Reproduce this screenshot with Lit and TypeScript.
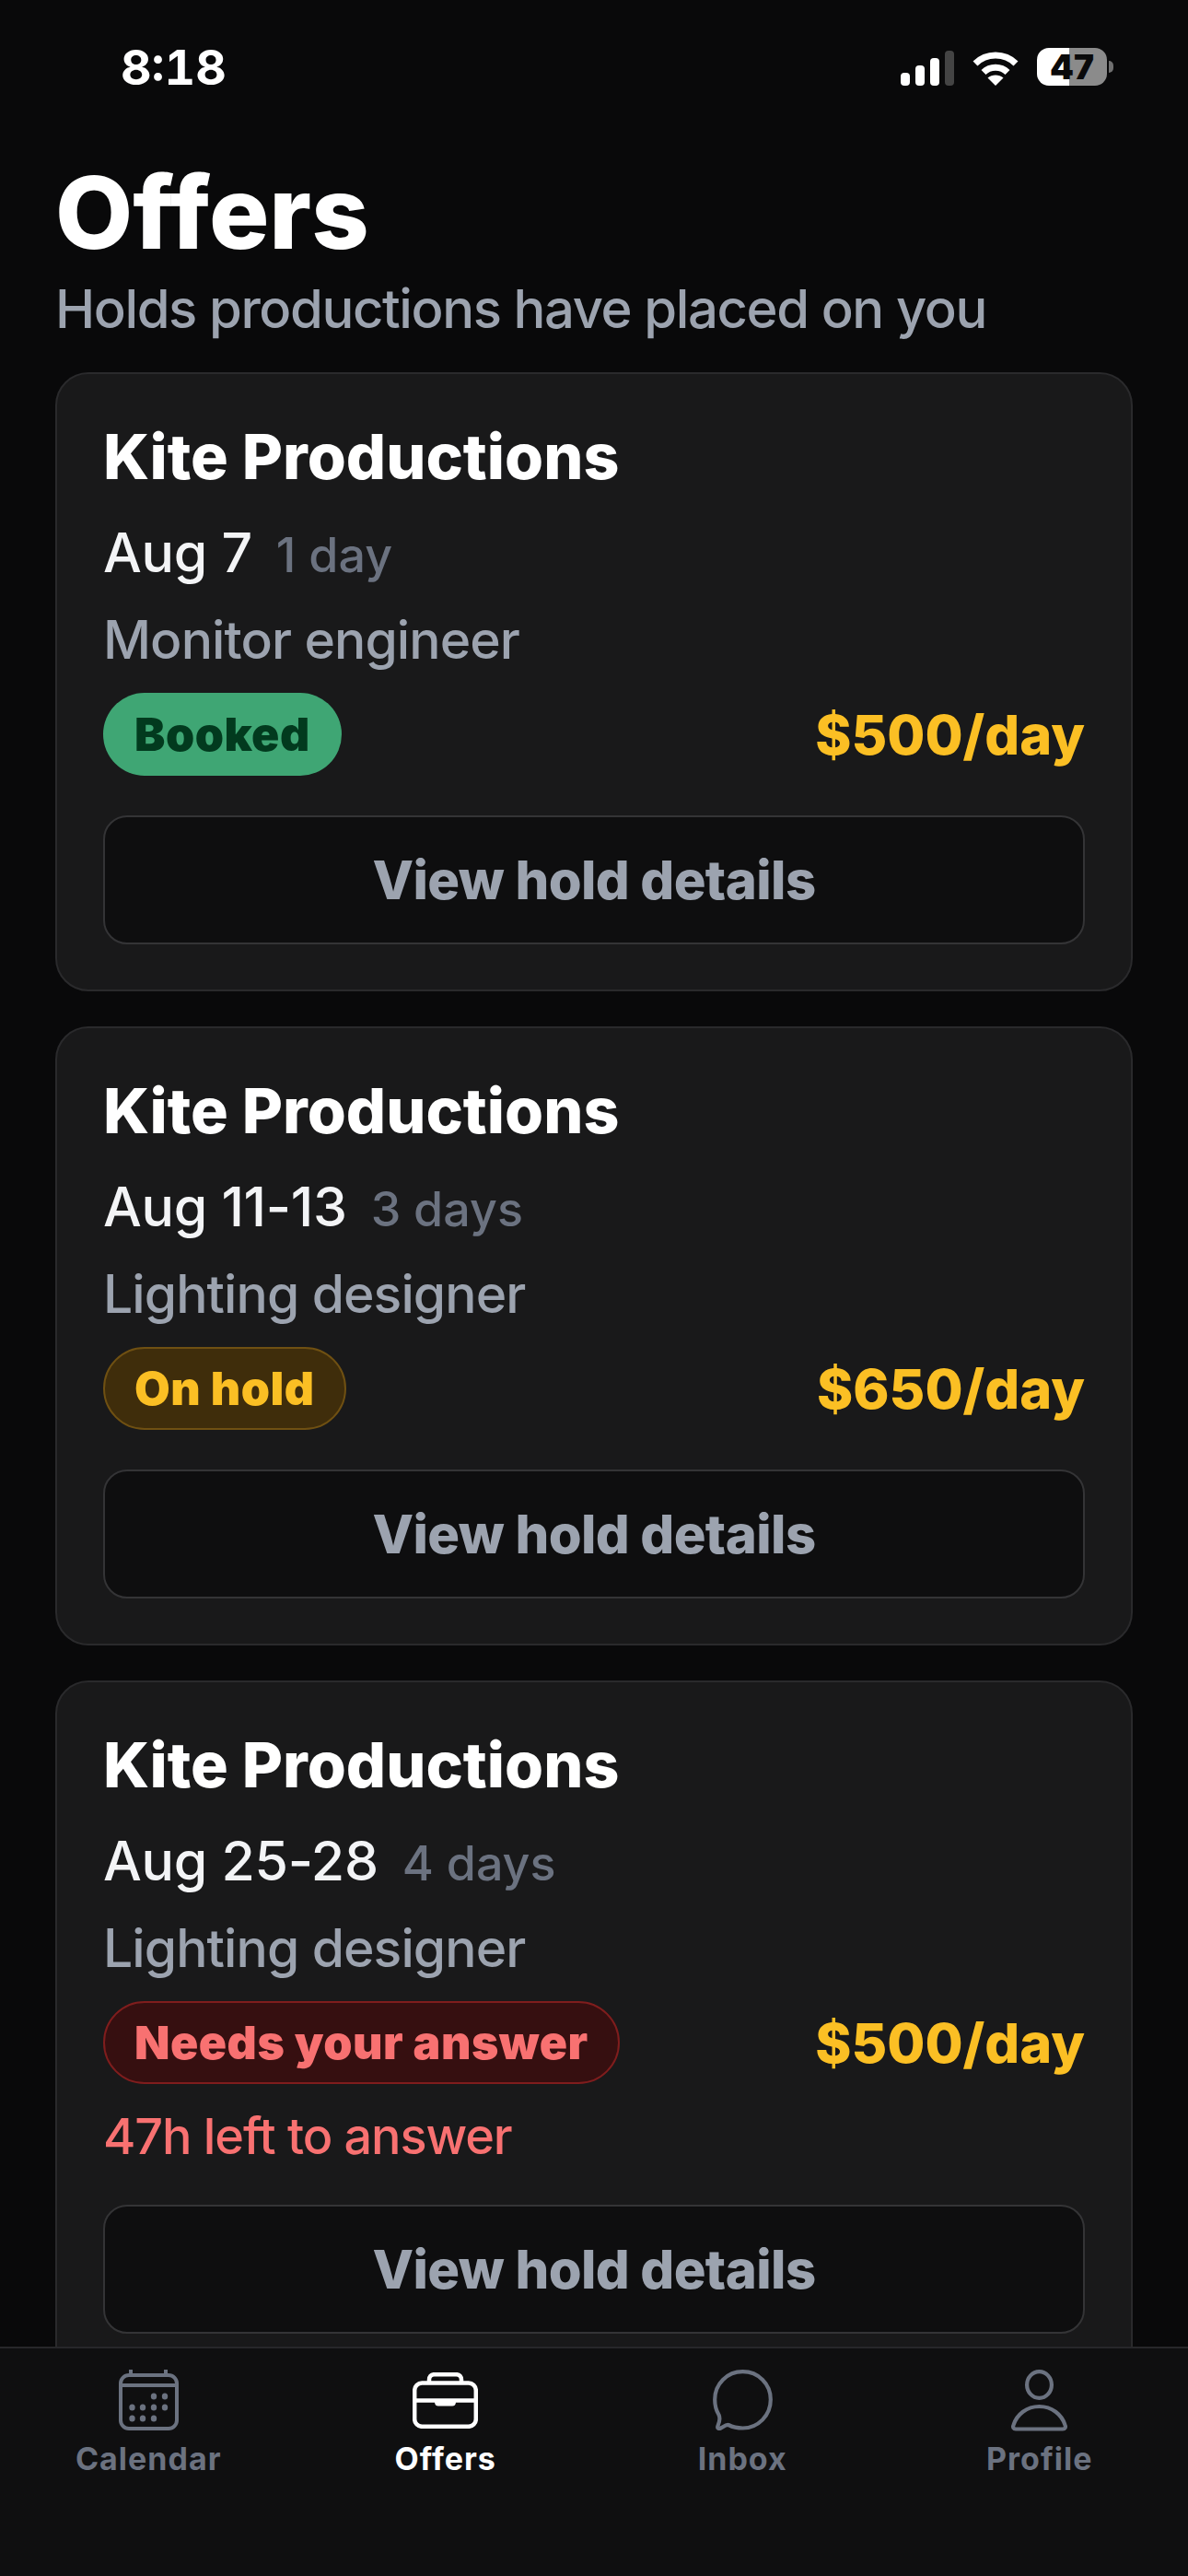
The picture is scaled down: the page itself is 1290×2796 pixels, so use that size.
import { LitElement, html, css, svg } from 'lit';
import { customElement } from 'lit/decorators.js';

type Offer = {
  dates: string;
  length: string;
  role: string;
  status: 'booked' | 'hold' | 'answer';
  label: string;
  rate: string;
  note?: string;
};

const OFFERS: Offer[] = [
  { dates: 'Aug 7', length: '1 day', role: 'Monitor engineer', status: 'booked', label: 'Booked', rate: '$500/day' },
  { dates: 'Aug 11-13', length: '3 days', role: 'Lighting designer', status: 'hold', label: 'On hold', rate: '$650/day' },
  {
    dates: 'Aug 25-28',
    length: '4 days',
    role: 'Lighting designer',
    status: 'answer',
    label: 'Needs your answer',
    rate: '$500/day',
    note: '47h left to answer',
  },
];

// tab icons, drawn at their real pixel size
const calendarDots = [
  [38, 29], [50, 29],
  [14.5, 41], [26, 41], [38, 41], [50, 41],
  [14.5, 53], [26, 53], [38, 53],
];

const calendarIcon = svg`
  <svg width="65" height="66" viewBox="0 0 65 66" fill="none" stroke="currentColor" stroke-width="4">
    <rect x="2" y="6" width="61" height="58" rx="9" />
    <path d="M2 17H63M13 0V6M51 0V6" />
    ${calendarDots.map(([x, y]) => svg`<ellipse cx=${x} cy=${y} rx="3.2" ry="3.6" fill="currentColor" stroke="none" />`)}
  </svg>`;

const briefcaseIcon = svg`
  <svg width="71" height="61" viewBox="0 0 71 61" fill="none" stroke="currentColor" stroke-width="4.5">
    <rect x="2.2" y="11.5" width="66.6" height="47.3" rx="8" />
    <path d="M18 11V8C18 4.5 20 2.2 23.5 2.2H47.5C51 2.2 53 4.5 53 8V11" />
    <path d="M2 30.5H69" />
    <path d="M24 30H47V32C47 35 45.5 36.5 43 36.5H28C25.5 36.5 24 35 24 32Z" fill="currentColor" stroke="none" />
  </svg>`;

const inboxIcon = svg`
  <svg width="65" height="66" viewBox="0 0 65 66" fill="none" stroke="currentColor" stroke-width="4.2" stroke-linejoin="round">
    <path d="M17 60C21 62 26 63.5 32.5 63.5C49.5 63.5 62.8 49.5 62.8 32.5C62.8 15.5 49.5 2.2 32.5 2.2C15.5 2.2 2.2 15.5 2.2 32.5C2.2 39 3.8 44.5 6.5 49C8 52 7.2 57 5.5 61C4.6 63.4 5.8 64.6 8.2 63.7C11 62.5 13.5 59.6 17 60Z" />
  </svg>`;

const profileIcon = svg`
  <svg width="61" height="67" viewBox="0 0 61 67" fill="none" stroke="currentColor" stroke-width="4.2">
    <ellipse cx="30.5" cy="16.5" rx="13.4" ry="14.4" />
    <path d="M5 64.5H56C58.6 64.5 59.4 62.6 58.6 60.4C55 48.6 44 40 30.5 40C17 40 6 48.6 2.4 60.4C1.6 62.6 2.4 64.5 5 64.5Z" />
  </svg>`;

const TABS = [
  { name: 'Calendar', icon: calendarIcon },
  { name: 'Offers', icon: briefcaseIcon, active: true },
  { name: 'Inbox', icon: inboxIcon },
  { name: 'Profile', icon: profileIcon },
];

@customElement('app-root')
export class AppRoot extends LitElement {
  static styles = css`
    :host {
      display: flex;
      flex-direction: column;
      width: 1290px;
      height: 2796px;
      overflow: hidden;
      background: #09090a;
      color: #fff;
      font-family: Inter, 'Liberation Sans', sans-serif;
    }
    .status {
      flex: none;
      height: 106px;
      display: flex;
      justify-content: space-between;
      align-items: flex-start;
      padding: 50px 81px 0 131px;
      box-sizing: border-box;
    }
    .time {
      font-size: 52px;
      line-height: 48px;
      font-weight: 700;
      font-variant-numeric: tabular-nums;
    }
    .status-icons {
      display: flex;
      align-items: flex-end;
      gap: 19px;
      padding-top: 2px;
    }
    .battery {
      display: flex;
      align-items: center;
      margin-left: 1px;
    }
    .cell {
      width: 76px;
      height: 41px;
      border-radius: 13px;
      background: linear-gradient(90deg, #fff 46%, #8b8b8b 46%);
      color: #0a0a0b;
      font-size: 37px;
      font-weight: 900;
      line-height: 41px;
      text-align: center;
    }
    .nub {
      width: 5px;
      height: 13px;
      margin-left: 2px;
      border-radius: 0 5px 5px 0;
      background: #707070;
    }
    .scroll {
      flex: 1;
      min-height: 0;
      overflow: hidden;
      padding: 0 60px;
    }
    h1 {
      margin: 80px 0 0;
      font-size: 109px;
      line-height: 88px;
      font-weight: 800;
    }
    .sub {
      margin: 28px 0 0;
      font-size: 58px;
      line-height: 66px;
      font-weight: 500;
      letter-spacing: -1.4px;
      color: #9ca3af;
    }
    .cards {
      display: flex;
      flex-direction: column;
      gap: 38px;
      margin-top: 36px;
    }
    .card {
      box-sizing: border-box;
      padding: 50px 50px 49px;
      background: #19191a;
      border: 2px solid #2a2a2c;
      border-radius: 36px;
      flex: none;
    }
    .name {
      font-size: 68px;
      line-height: 78px;
      font-weight: 800;
    }
    .when {
      display: flex;
      align-items: baseline;
      gap: 26px;
      margin-top: 31px;
      font-size: 59px;
      line-height: 70px;
      font-weight: 500;
      letter-spacing: -0.3px;
      color: #f3f4f6;
    }
    .length {
      font-size: 52px;
      line-height: 1;
      letter-spacing: 0;
      color: #6b7280;
    }
    .role {
      margin-top: 27px;
      font-size: 57px;
      line-height: 66px;
      font-weight: 500;
      letter-spacing: -0.9px;
      color: #9ca3af;
    }
    .meta {
      display: flex;
      justify-content: space-between;
      align-items: center;
      margin-top: 24px;
    }
    .badge {
      box-sizing: border-box;
      height: 90px;
      padding: 0 32px;
      display: flex;
      align-items: center;
      border-radius: 45px;
      border: 2px solid transparent;
      font-size: 50px;
      font-weight: 900;
      letter-spacing: 0.5px;
    }
    .badge.booked {
      background: #3fa674;
      color: #023a1e;
    }
    .badge.hold {
      background: #3f2d0b;
      border-color: #6f5012;
      color: #fbbf24;
    }
    .badge.answer {
      background: #360f10;
      border-color: #7f1d1d;
      color: #f87171;
    }
    .rate {
      font-size: 59.5px;
      font-weight: 800;
      color: #fbbf24;
    }
    .note {
      margin: 24px 0 -2px;
      font-size: 54px;
      line-height: 66px;
      font-weight: 500;
      letter-spacing: -1.1px;
      color: #f87171;
    }
    .action {
      box-sizing: border-box;
      display: block;
      width: 100%;
      height: 140px;
      margin-top: 43px;
      background: #0e0e0f;
      border: 2px solid #343436;
      border-radius: 26px;
      font: inherit;
      font-size: 58px;
      font-weight: 800;
      letter-spacing: -0.6px;
      color: #9ca3af;
    }
    nav {
      flex: none;
      height: 249px;
      box-sizing: border-box;
      display: grid;
      grid-template-columns: repeat(4, 1fr);
      padding-top: 23px;
      background: #0f0f10;
      border-top: 2px solid #27272a;
    }
    .tab {
      display: flex;
      flex-direction: column;
      align-items: center;
      color: #6b7280;
      font-size: 34px;
      font-weight: 700;
      letter-spacing: 1px;
    }
    .tab.active {
      color: #fff;
    }
    .tab-icon {
      height: 66px;
      display: flex;
      align-items: center;
    }
    .tab-label {
      margin-top: 10px;
      line-height: 42px;
    }
  `;

  renderStatus() {
    return html`
      <div class="status">
        <div class="time">8:18</div>
        <div class="status-icons">
          <svg width="59" height="38" viewBox="0 0 59 38">
            <rect x="0" y="24" width="10" height="14" rx="4" fill="#fff" />
            <rect x="16" y="16" width="10" height="22" rx="4" fill="#fff" />
            <rect x="32" y="8" width="10" height="30" rx="4" fill="#fff" />
            <rect x="48" y="0" width="10" height="38" rx="4" fill="#444" />
          </svg>
          <svg width="50" height="37" viewBox="0 0 50 37" fill="none" stroke="#fff" stroke-width="7">
            <path d="M3 13C15 1 35 1 47 13" />
            <path d="M12 22.5C19 15.5 31 15.5 38 22.5" />
            <path d="M25 37L16.5 28.5C21 24.5 29 24.5 33.5 28.5Z" fill="#fff" stroke="none" />
          </svg>
          <div class="battery">
            <div class="cell">47</div>
            <div class="nub"></div>
          </div>
        </div>
      </div>
    `;
  }

  renderOffer(offer: Offer) {
    return html`
      <article class="card">
        <div class="name">Kite Productions</div>
        <div class="when"><span>${offer.dates}</span><span class="length">${offer.length}</span></div>
        <div class="role">${offer.role}</div>
        <div class="meta">
          <span class="badge ${offer.status}">${offer.label}</span>
          <span class="rate">${offer.rate}</span>
        </div>
        ${offer.note ? html`<div class="note">${offer.note}</div>` : ''}
        <button class="action">View hold details</button>
      </article>
    `;
  }

  render() {
    return html`
      ${this.renderStatus()}
      <main class="scroll">
        <h1>Offers</h1>
        <p class="sub">Holds productions have placed on you</p>
        <div class="cards">${OFFERS.map((o) => this.renderOffer(o))}</div>
      </main>
      <nav>
        ${TABS.map(
          (t) => html`
            <div class="tab ${t.active ? 'active' : ''}">
              <div class="tab-icon">${t.icon}</div>
              <div class="tab-label">${t.name}</div>
            </div>
          `,
        )}
      </nav>
    `;
  }
}
